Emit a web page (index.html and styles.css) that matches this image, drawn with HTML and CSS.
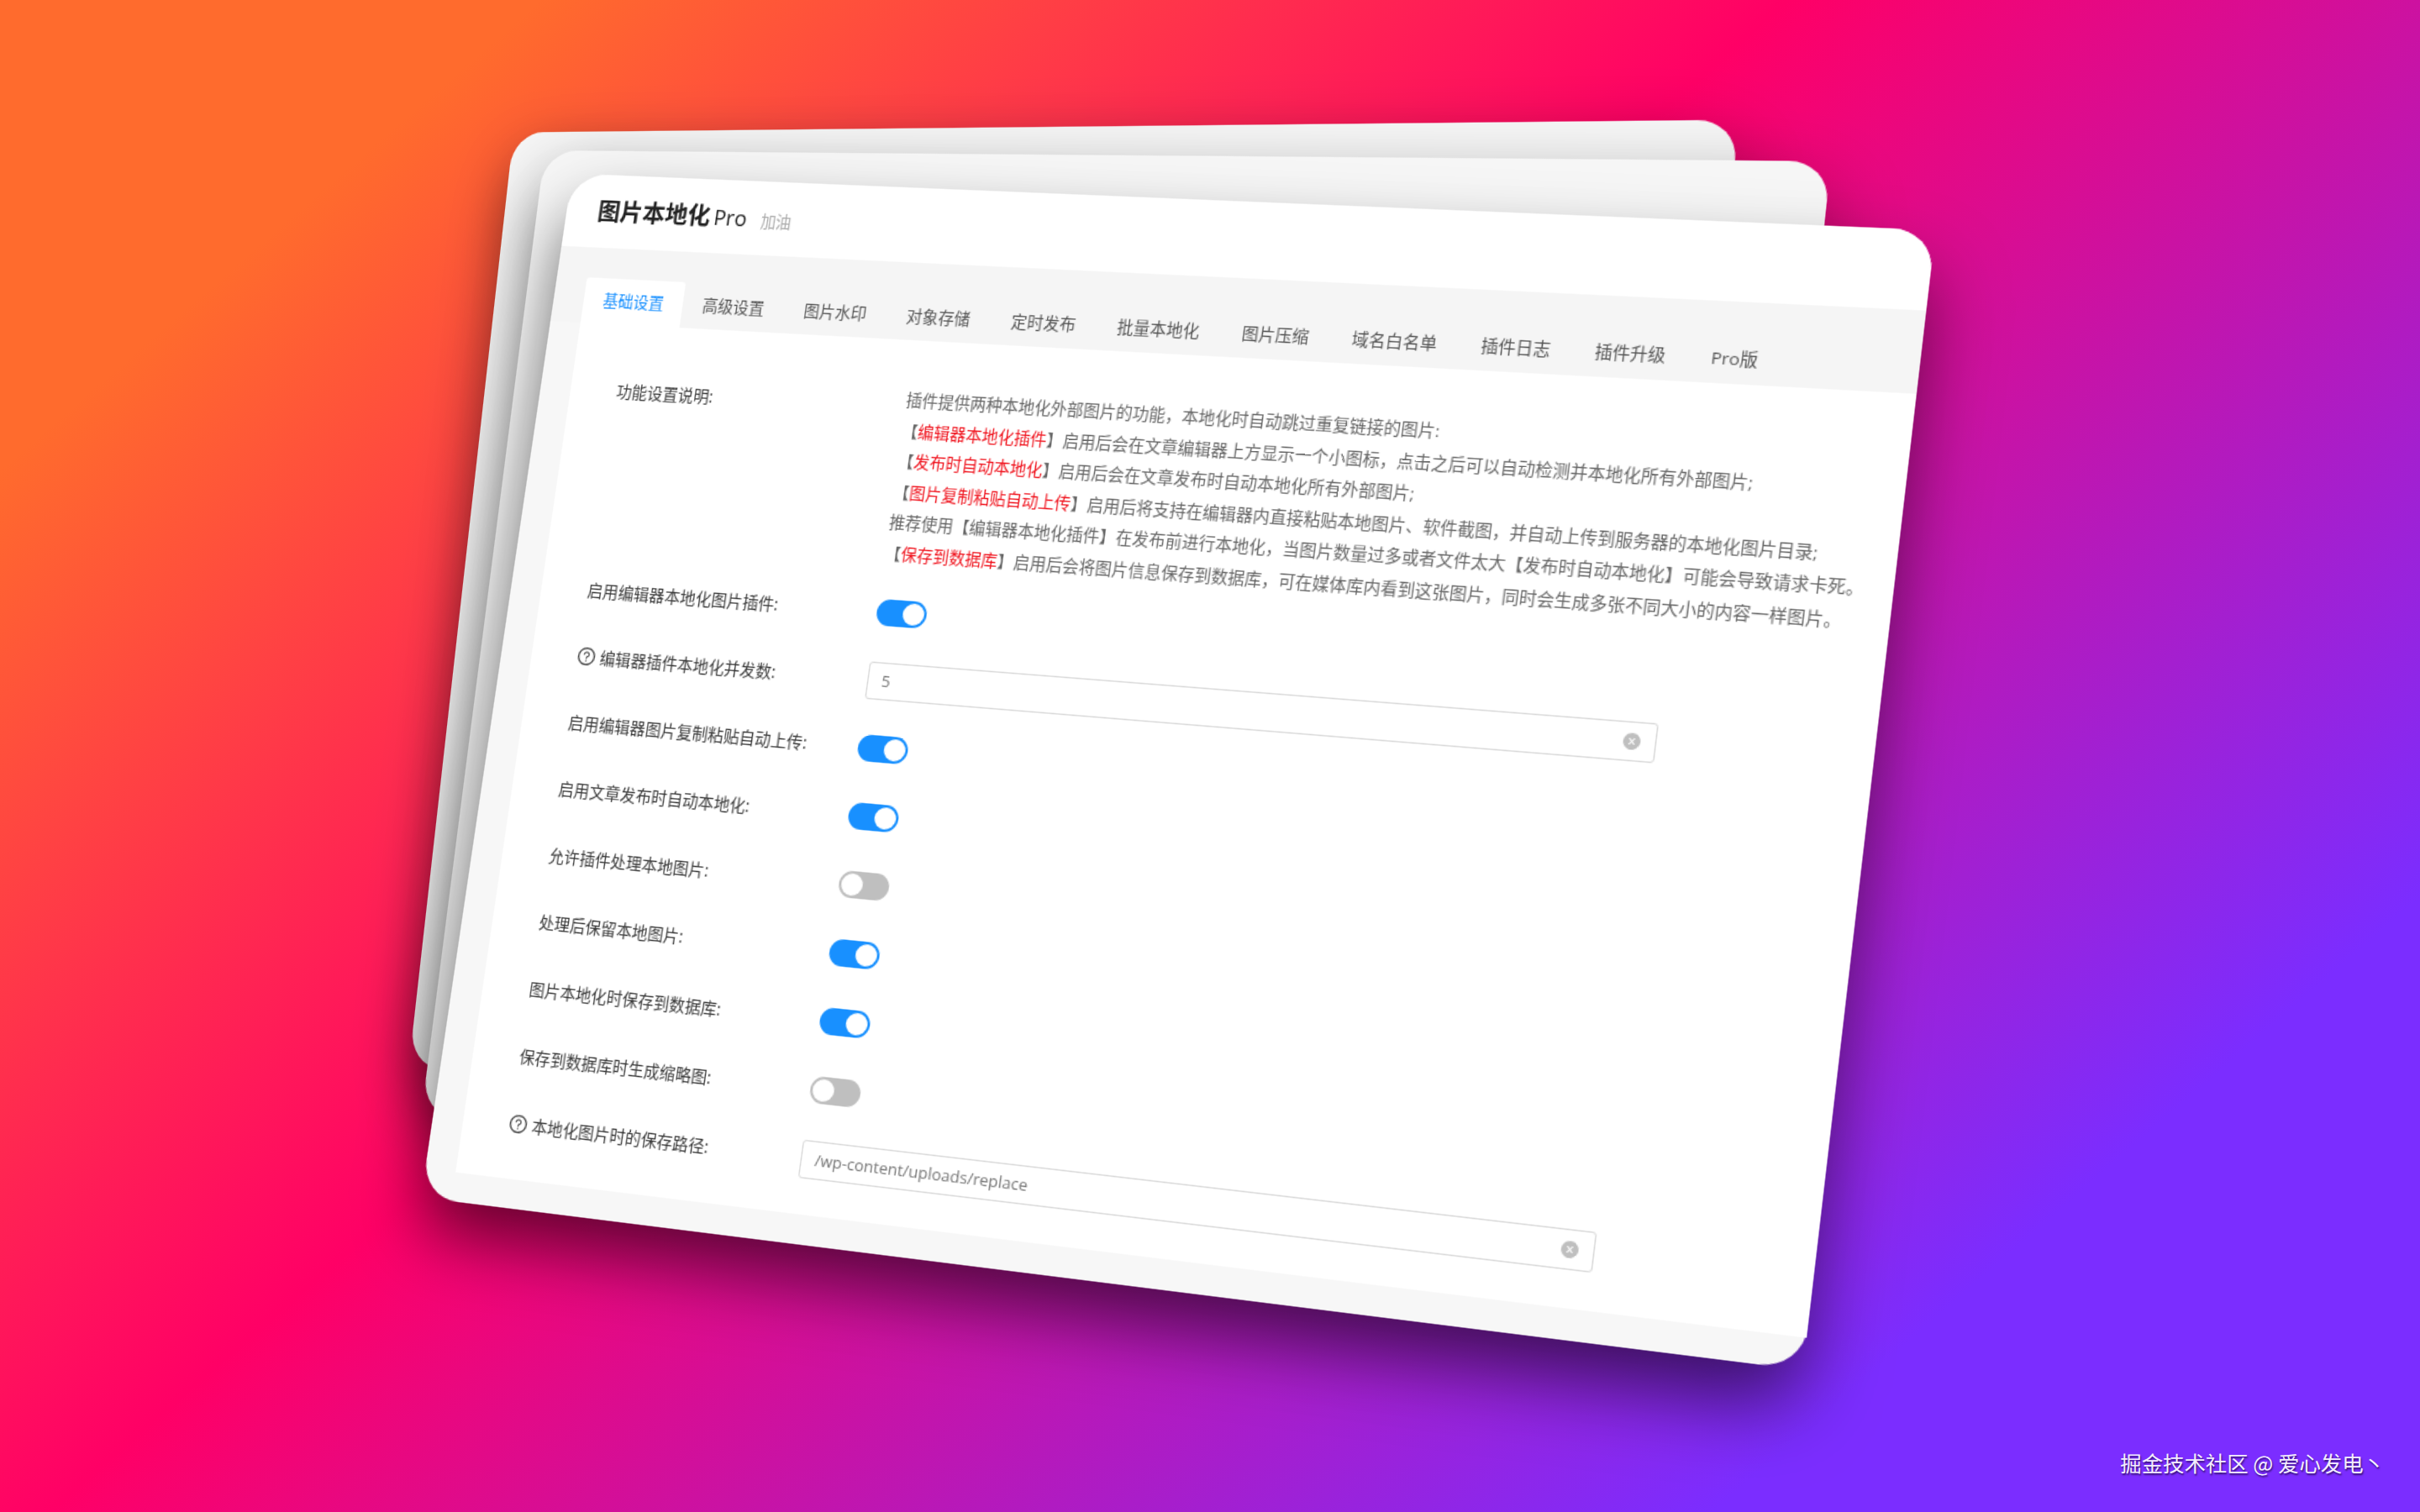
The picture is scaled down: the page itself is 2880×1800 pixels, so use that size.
FILE: index.html
```html
<!DOCTYPE html>
<html lang="zh-CN">
<head>
    <meta charset="UTF-8">
    <title>图片本地化 Pro</title>
    <link rel="stylesheet" href="styles.css">
</head>
<body>
<div class="scene">
    <div class="card card-back-1"></div>
    <div class="card card-back-2"></div>
    <div class="card card-front">
        <div class="header">
            <span class="title"><b>图片本地化</b> <span class="title-pro">Pro</span></span>
            <span class="subtitle">加油</span>
        </div>
        <div class="tabs">
            <div class="tab active">基础设置</div>
            <div class="tab">高级设置</div>
            <div class="tab">图片水印</div>
            <div class="tab">对象存储</div>
            <div class="tab">定时发布</div>
            <div class="tab">批量本地化</div>
            <div class="tab">图片压缩</div>
            <div class="tab">域名白名单</div>
            <div class="tab">插件日志</div>
            <div class="tab">插件升级</div>
            <div class="tab">Pro版</div>
        </div>
        <div class="panel">
            <div class="row row-desc">
                <div class="label">功能设置说明:</div>
                <div class="desc">
                    <p>插件提供两种本地化外部图片的功能，本地化时自动跳过重复链接的图片:</p>
                    <p>【<em>编辑器本地化插件</em>】启用后会在文章编辑器上方显示一个小图标，点击之后可以自动检测并本地化所有外部图片;</p>
                    <p>【<em>发布时自动本地化</em>】启用后会在文章发布时自动本地化所有外部图片;</p>
                    <p>【<em>图片复制粘贴自动上传</em>】启用后将支持在编辑器内直接粘贴本地图片、软件截图，并自动上传到服务器的本地化图片目录;</p>
                    <p>推荐使用【编辑器本地化插件】在发布前进行本地化，当图片数量过多或者文件太大【发布时自动本地化】可能会导致请求卡死。</p>
                    <p>【<em>保存到数据库</em>】启用后会将图片信息保存到数据库，可在媒体库内看到这张图片，同时会生成多张不同大小的内容一样图片。</p>
                </div>
            </div>
            <div class="row">
                <div class="label">启用编辑器本地化图片插件:</div>
                <div class="switch on"></div>
            </div>
            <div class="row">
                <div class="label">
                    <svg class="help" viewBox="64 64 896 896"><path d="M512 64C264.6 64 64 264.6 64 512s200.6 448 448 448 448-200.6 448-448S759.4 64 512 64zm0 820c-205.4 0-372-166.6-372-372s166.6-372 372-372 372 166.6 372 372-166.6 372-372 372z"/><path d="M623.6 316.7C593.6 290.4 554 276 512 276s-81.6 14.5-111.6 40.7C369.2 344 352 380.7 352 420v7.6c0 4.4 3.6 8 8 8h48c4.4 0 8-3.6 8-8V420c0-44.1 43.1-80 96-80s96 35.9 96 80c0 31.1-22 59.6-56.1 72.7-21.2 8.1-39.2 22.3-52.1 40.9-13.1 19-19.9 41.8-19.9 64.9V620c0 4.4 3.6 8 8 8h48c4.4 0 8-3.6 8-8v-22.7a48.3 48.3 0 0 1 30.9-44.8c59-22.7 97.1-74.7 97.1-132.5.1-39.3-17.1-76-48.3-103.3zM472 732a40 40 0 1 0 80 0 40 40 0 1 0-80 0z"/></svg>
                    编辑器插件本地化并发数:
                </div>
                <div class="input">
                    <span>5</span>
                    <svg class="clear" viewBox="64 64 896 896"><path d="M512 64C264.6 64 64 264.6 64 512s200.6 448 448 448 448-200.6 448-448S759.4 64 512 64zm165.4 618.2l-66-.3L512 563.4l-99.3 118.4-66.1.3c-4.4 0-8-3.5-8-8 0-1.9.7-3.7 1.9-5.2l130.1-155L340.5 359a8.32 8.32 0 0 1-1.9-5.2c0-4.4 3.6-8 8-8l66.1.3L512 464.6l99.3-118.4 66-.3c4.4 0 8 3.5 8 8 0 1.9-.7 3.7-1.9 5.2L553.5 514l130 155c1.2 1.5 1.9 3.3 1.9 5.2 0 4.4-3.6 8-8 8z"/></svg>
                </div>
            </div>
            <div class="row">
                <div class="label">启用编辑器图片复制粘贴自动上传:</div>
                <div class="switch on"></div>
            </div>
            <div class="row">
                <div class="label">启用文章发布时自动本地化:</div>
                <div class="switch on"></div>
            </div>
            <div class="row">
                <div class="label">允许插件处理本地图片:</div>
                <div class="switch"></div>
            </div>
            <div class="row">
                <div class="label">处理后保留本地图片:</div>
                <div class="switch on"></div>
            </div>
            <div class="row">
                <div class="label">图片本地化时保存到数据库:</div>
                <div class="switch on"></div>
            </div>
            <div class="row">
                <div class="label">保存到数据库时生成缩略图:</div>
                <div class="switch"></div>
            </div>
            <div class="row">
                <div class="label">
                    <svg class="help" viewBox="64 64 896 896"><path d="M512 64C264.6 64 64 264.6 64 512s200.6 448 448 448 448-200.6 448-448S759.4 64 512 64zm0 820c-205.4 0-372-166.6-372-372s166.6-372 372-372 372 166.6 372 372-166.6 372-372 372z"/><path d="M623.6 316.7C593.6 290.4 554 276 512 276s-81.6 14.5-111.6 40.7C369.2 344 352 380.7 352 420v7.6c0 4.4 3.6 8 8 8h48c4.4 0 8-3.6 8-8V420c0-44.1 43.1-80 96-80s96 35.9 96 80c0 31.1-22 59.6-56.1 72.7-21.2 8.1-39.2 22.3-52.1 40.9-13.1 19-19.9 41.8-19.9 64.9V620c0 4.4 3.6 8 8 8h48c4.4 0 8-3.6 8-8v-22.7a48.3 48.3 0 0 1 30.9-44.8c59-22.7 97.1-74.7 97.1-132.5.1-39.3-17.1-76-48.3-103.3zM472 732a40 40 0 1 0 80 0 40 40 0 1 0-80 0z"/></svg>
                    本地化图片时的保存路径:
                </div>
                <div class="input">
                    <span>/wp-content/uploads/replace</span>
                    <svg class="clear" viewBox="64 64 896 896"><path d="M512 64C264.6 64 64 264.6 64 512s200.6 448 448 448 448-200.6 448-448S759.4 64 512 64zm165.4 618.2l-66-.3L512 563.4l-99.3 118.4-66.1.3c-4.4 0-8-3.5-8-8 0-1.9.7-3.7 1.9-5.2l130.1-155L340.5 359a8.32 8.32 0 0 1-1.9-5.2c0-4.4 3.6-8 8-8l66.1.3L512 464.6l99.3-118.4 66-.3c4.4 0 8 3.5 8 8 0 1.9-.7 3.7-1.9 5.2L553.5 514l130 155c1.2 1.5 1.9 3.3 1.9 5.2 0 4.4-3.6 8-8 8z"/></svg>
                </div>
            </div>
        </div>
    </div>
    <div class="watermark">掘金技术社区 @ 爱心发电丶</div>
</div>
</body>
</html>
```

FILE: styles.css
```css
* {
    box-sizing: border-box;
}
body {
    margin: 0;
    font-family: "Open Sans", "Noto Sans CJK SC", sans-serif;
    color: #3a3a3a;
}
.scene {
    position: relative;
    width: 2880px;
    height: 1800px;
    overflow: hidden;
    background: linear-gradient(139deg, #ff6b2d 13%, #ff0066 43%, #7b2dff 83%);
}

/* the three sheets sit on a free canvas, each one tilted by its own matrix */
.card {
    position: absolute;
    left: 0;
    top: 0;
    width: 1110px;
    height: 872px;
    border-radius: 32px;
    background: #fff;
    box-shadow: 0 30px 56px -2px rgba(0, 0, 0, 0.58);
    transform-origin: 0 0;
}
.card-back-1 {
    background: #f6f6f6;
    box-shadow: 0 24px 60px rgba(0, 0, 0, 0.42);
    transform: matrix3d(1.0101, -0.034532, 0, -0.00014688, -0.14528, 1.26638, 0, -0.000004907, 0, 0, 1, 0, 611.3, 157.6, 0, 1);
}
.card-back-2 {
    background: #f6f6f6;
    box-shadow: 0 24px 60px rgba(0, 0, 0, 0.42);
    transform: matrix3d(1.12195, -0.011117, 0, -0.000118, -0.17789, 1.29073, 0, -0.00001858, 0, 0, 1, 0, 648.4, 179.1, 0, 1);
}
.card-front {
    display: flex;
    flex-direction: column;
    background: #f7f7f7;
    transform: matrix3d(1.25793, 0.036559, 0, -0.0000885, -0.21953, 1.36064, 0, -0.00002616, 0, 0, 1, 0, 681, 206.5, 0, 1);
}

.header {
    height: 63px;
    padding: 16px 0 0 28px;
    background: #fff;
    border-radius: 32px 32px 0 0;
}
.title {
    font-size: 20px;
    color: #222;
}
.title b {
    font-weight: 700;
}
.title-pro {
    margin-left: -2px;
    font-size: 18px;
}
.subtitle {
    margin-left: 8px;
    font-size: 13.5px;
    color: #aaa;
}

.tabs {
    display: flex;
    align-items: flex-end;
    height: 65px;
    padding-left: 27px;
    background: #f5f5f5;
}
.tab {
    height: 39px;
    padding: 0 17.2px;
    font-size: 13.5px;
    line-height: 38px;
    color: #555;
    white-space: nowrap;
}
.tab.active {
    color: #1890ff;
    background: #fff;
    border-radius: 3px 3px 0 0;
}

.panel {
    flex: 1;
    margin: 0 0 24px 27px;
    padding: 37px 0 0 40px;
    background: #fff;
}
.row {
    display: grid;
    grid-template-columns: 252px 630px;
    align-items: center;
    height: 32px;
    margin-bottom: 24px;
    font-size: 13.5px;
}
.row .label {
    margin: -2px 0 0 1px;
    font-size: 13.6px;
}
.row-desc {
    align-items: start;
    height: 156px;
    margin-bottom: 18px;
}
.row-desc .label {
    margin-top: 8px;
    line-height: 24px;
}
.desc {
    margin-top: 1px;
    color: #666;
    line-height: 25.6px;
    white-space: nowrap;
}
.desc p {
    margin: 0;
}
.desc em {
    font-style: normal;
    color: #f0141e;
}
.help {
    width: 15px;
    height: 15px;
    margin-right: 1px;
    vertical-align: -2px;
    fill: #444;
}

.switch {
    position: relative;
    width: 42px;
    height: 22px;
    border-radius: 11px;
    background: #bfbfbf;
}
.switch::after {
    content: "";
    position: absolute;
    top: 2px;
    left: 2px;
    width: 18px;
    height: 18px;
    border-radius: 50%;
    background: #fff;
}
.switch.on {
    background: #1890ff;
}
.switch.on::after {
    left: 22px;
}

.input {
    display: flex;
    align-items: center;
    justify-content: space-between;
    height: 31px;
    padding: 0 11px;
    border: 1px solid #d9d9d9;
    border-radius: 3px;
    font-size: 13px;
    color: #777;
}
.clear {
    width: 13px;
    height: 13px;
    fill: #bfbfbf;
}

.watermark {
    position: absolute;
    right: 42px;
    bottom: 42px;
    font-family: "Noto Sans CJK SC", sans-serif;
    font-size: 25.4px;
    line-height: 34px;
    color: #f4eeff;
    text-shadow: 1px 2px 2px rgba(0, 0, 0, 0.55);
}
```
